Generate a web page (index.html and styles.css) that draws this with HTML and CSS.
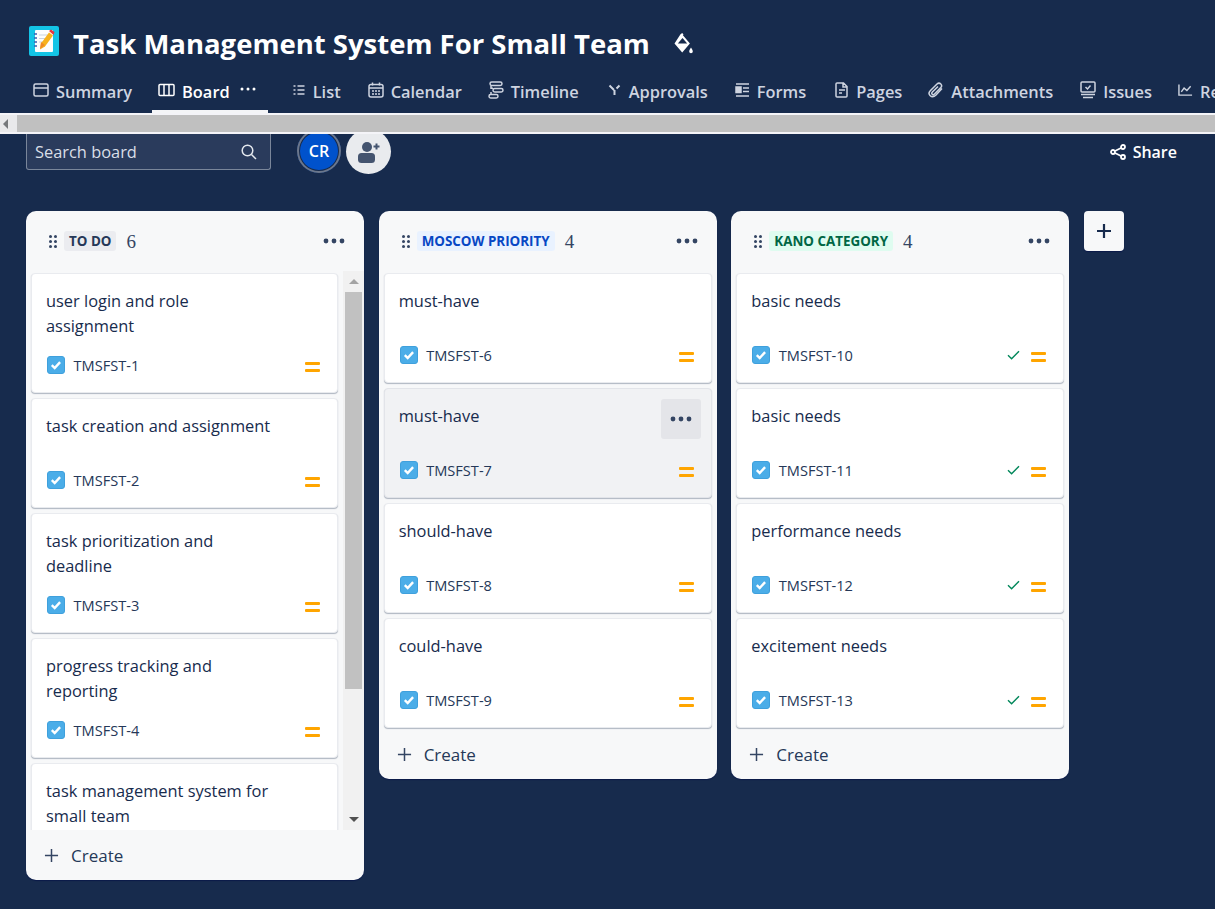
FILE: index.html

```html
<!DOCTYPE html>
<html lang="en">
<head>
  <meta charset="UTF-8" />
  <meta name="viewport" content="width=device-width, initial-scale=1" />
  <title>Task Management System For Small Team</title>
  <link rel="stylesheet" href="styles.css">
</head>
<body>

  <svg class="sprites" aria-hidden="true">
    <symbol id="i-task" viewBox="0 0 18 18">
      <rect x="0.5" y="0.5" width="17" height="17" rx="2.5" fill="#4bade8" stroke="#3fa0dc"/>
      <path d="M4.8 9.2l2.900 2.900 5.400-6" fill="none" stroke="#fff" stroke-width="2.400"/>
    </symbol>
    <symbol id="i-medium" viewBox="0 0 15 10">
      <rect y="0" width="15" height="3" rx="1" fill="#ffa500"/>
      <rect y="7" width="15" height="3" rx="1" fill="#ffa500"/>
    </symbol>
    <symbol id="i-done" viewBox="0 0 13 10">
      <path d="M1 5.200l3.600 3.600L12 1.200" fill="none" stroke="#00875a" stroke-width="1.400"/>
    </symbol>
    <symbol id="i-more" viewBox="0 0 22 6">
      <circle cx="3" cy="3" r="2.400"/><circle cx="11" cy="3" r="2.400"/><circle cx="19" cy="3" r="2.400"/>
    </symbol>
    <symbol id="i-grip" viewBox="0 0 8 13">
      <circle cx="1.500" cy="1.500" r="1.500"/><circle cx="6.500" cy="1.500" r="1.500"/>
      <circle cx="1.500" cy="6.500" r="1.500"/><circle cx="6.500" cy="6.500" r="1.500"/>
      <circle cx="1.500" cy="11.500" r="1.500"/><circle cx="6.500" cy="11.500" r="1.500"/>
    </symbol>
    <symbol id="i-plus" viewBox="0 0 16 16">
      <path d="M8 1v14M1 8h14" fill="none" stroke="currentColor"/>
    </symbol>
  </svg>

  <header class="project">
    <svg class="logo" viewBox="0 0 30 30">
      <rect width="30" height="30" rx="2" fill="#13c4e6"/>
      <rect x="6" y="4" width="18" height="22" rx="1" fill="#fdfdfd"/>
      <path d="M10 9h10M10 12.500h8M10 16h5" stroke="#c9d3de" stroke-width="1.200"/>
      <path d="M5 8h3M5 12h3M5 16h3M5 20h3" stroke="#3d5fb0" stroke-width="1.500"/>
      <path d="M20 6.500l4 3-8 11-5 3 1-6z" fill="#f7b21c"/>
      <path d="M16 19l-4-3-1 7z" fill="#f08a24"/>
      <path d="M20 5l2-1.500 3.500 2.500-1 3z" fill="#e8343f"/>
    </svg>
    <h1 class="project-name">Task Management System For Small Team</h1>
    <svg class="bucket" viewBox="0 0 19 21">
      <path d="M6.500 1.200l1.700-1.200 1.300 1.500-.6.700 7 8.300-7.700 9-7.700-9z" fill="#fff"/>
      <path d="M3.800 10.500L8.500 5l4.700 5.500z" fill="#172b4d"/>
      <path d="M17 14.500c.8 1.500 1.800 2.800 1.800 4a1.800 1.800 0 0 1-3.600 0c0-1.200 1-2.500 1.800-4z" fill="#fff"/>
    </svg>
  </header>

  <nav class="tabs">
    <a class="tab">
      <svg class="tab-icon" viewBox="0 0 16 14"><rect x="1" y="1" width="14" height="12" rx="1.500"/><path d="M1 5h14"/></svg>
      Summary
    </a>
    <a class="tab tab-active">
      <svg class="tab-icon tab-icon-board" viewBox="0 0 17 13"><rect x="1" y="1" width="15" height="11" rx="1"/><path d="M6 1v11M11 1v11"/></svg>
      Board
      <svg class="tab-more" viewBox="0 0 16 4"><circle cx="2" cy="2" r="1.500"/><circle cx="8" cy="2" r="1.500"/><circle cx="14" cy="2" r="1.500"/></svg>
    </a>
    <a class="tab">
      <svg class="tab-icon tab-icon-small" viewBox="0 0 14 12"><path d="M1.500 2h2M1.500 6h2M1.500 10h2M5.500 2h7M5.500 6h7M5.500 10h7"/></svg>
      List
    </a>
    <a class="tab tab-shift-1">
      <svg class="tab-icon" viewBox="0 0 16 16"><rect x="1" y="2.500" width="14" height="12.500" rx="2"/><path d="M4.500 0.500v3M11.500 0.500v3M1 6h14M4 9h2M7 9h2M10 9h2M4 12h2M7 12h2M10 12h2"/></svg>
      Calendar
    </a>
    <a class="tab">
      <svg class="tab-icon tab-icon-tall" viewBox="0 0 16 18"><rect x="2" y="1" width="12" height="3.500" rx="1.700"/><rect x="5" y="7.500" width="10" height="3.500" rx="1.700"/><rect x="1" y="13.500" width="9" height="3.500" rx="1.700"/><path d="M3 4.500v2.800h2M3 11v2.500"/></svg>
      Timeline
    </a>
    <a class="tab tab-shift-3">
      <svg class="tab-icon tab-icon-small tab-icon-bold" viewBox="0 0 14 12"><path d="M1.500 1.500l4.500 4.500M11.500 1.500L8.500 4.500M6.500 6v5"/></svg>
      Approvals
    </a>
    <a class="tab tab-shift-1">
      <svg class="tab-icon tab-icon-mid" viewBox="0 0 15 14"><path d="M1 1h13M1 13h13M8 5h6M8 8.500h6"/><rect x="1" y="4" width="5" height="5.500" fill="currentColor"/></svg>
      Forms
    </a>
    <a class="tab tab-shift-3">
      <svg class="tab-icon tab-icon-small" viewBox="0 0 14 16"><path d="M2 1h6.500L12 4.500V14a1 1 0 0 1-1 1H2a1 1 0 0 1-1-1V2a1 1 0 0 1 1-1zM8 1v4h4M4 8h6M4 11h3"/></svg>
      Pages
    </a>
    <a class="tab">
      <svg class="tab-icon" viewBox="0 0 16 16"><path d="M14 6.500L8 13c-2 2-4.500 2-6 .500s-1-3.500.5-5L9 2c1.300-1.200 2.800-1 3.800 0s1 2.500 0 3.600L6.500 12c-.8.800-1.700.8-2.300.200s-.5-1.500.2-2.200L10 4.500"/></svg>
      Attachments
    </a>
    <a class="tab tab-shift-1">
      <svg class="tab-icon tab-icon-tall" viewBox="0 0 16 18"><rect x="1" y="1" width="14" height="10" rx="1"/><path d="M5.500 6l2 2 3-3.500M1 13.500h14M3 16.500h10"/></svg>
      Issues
    </a>
    <a class="tab">
      <svg class="tab-icon tab-icon-mid" viewBox="0 0 16 13"><path d="M1 0.500V12h14M3.500 8.500l3-4 3 2.500 4-4.500"/></svg>
      Reports
    </a>
  </nav>

  <div class="h-scroll">
    <div class="h-scroll-btn"></div>
    <div class="h-scroll-thumb"></div>
  </div>

  <div class="toolbar">
    <div class="search">
      <span class="search-text">Search board</span>
      <svg class="search-icon" viewBox="0 0 16 16"><circle cx="6.500" cy="6.500" r="5.300"/><path d="M10.500 10.500L15 15"/></svg>
    </div>
    <div class="people">
      <div class="avatar">CR</div>
      <div class="add-person">
        <svg class="add-person-icon" viewBox="0 0 22 22">
          <circle cx="9" cy="6" r="5"/>
          <rect x="0" y="12" width="17" height="10" rx="3.500"/>
          <path d="M15.500 5.500h6M18.500 2.500v6" stroke="#44546f" stroke-width="2"/>
        </svg>
      </div>
    </div>
    <a class="share">
      <svg class="share-icon" viewBox="0 0 16 16"><circle cx="3" cy="8" r="2"/><circle cx="13" cy="3" r="2"/><circle cx="13" cy="13" r="2"/><path d="M5 7l6-3M5 9l6 3"/></svg>
      Share
    </a>
  </div>

  <main class="board">

    <section class="column">
      <div class="column-head">
        <svg class="grip"><use href="#i-grip"/></svg>
        <span class="badge badge-todo">TO DO</span>
        <span class="count">6</span>
        <svg class="more"><use href="#i-more"/></svg>
      </div>
      <div class="column-body">
        <div class="cards cards-scroll">
          <article class="card">
            <p class="card-title narrow">user login and role assignment</p>
            <div class="card-meta">
              <svg class="task-icon"><use href="#i-task"/></svg>
              <span class="card-id">TMSFST-1</span>
              <svg class="priority"><use href="#i-medium"/></svg>
            </div>
          </article>
          <article class="card">
            <p class="card-title">task creation and assignment</p>
            <div class="card-meta">
              <svg class="task-icon"><use href="#i-task"/></svg>
              <span class="card-id">TMSFST-2</span>
              <svg class="priority"><use href="#i-medium"/></svg>
            </div>
          </article>
          <article class="card">
            <p class="card-title narrow">task prioritization and deadline</p>
            <div class="card-meta">
              <svg class="task-icon"><use href="#i-task"/></svg>
              <span class="card-id">TMSFST-3</span>
              <svg class="priority"><use href="#i-medium"/></svg>
            </div>
          </article>
          <article class="card">
            <p class="card-title narrow">progress tracking and reporting</p>
            <div class="card-meta">
              <svg class="task-icon"><use href="#i-task"/></svg>
              <span class="card-id">TMSFST-4</span>
              <svg class="priority"><use href="#i-medium"/></svg>
            </div>
          </article>
          <article class="card">
            <p class="card-title narrow">task management system for small team</p>
          </article>
        </div>
        <div class="v-scroll">
          <div class="v-scroll-btn"><span class="arrow-up"></span></div>
          <div class="v-scroll-thumb"></div>
          <div class="v-scroll-rest"></div>
          <div class="v-scroll-btn"><span class="arrow-down"></span></div>
        </div>
      </div>
      <div class="create">
        <svg class="create-icon"><use href="#i-plus"/></svg>
        Create
      </div>
    </section>

    <section class="column">
      <div class="column-head">
        <svg class="grip"><use href="#i-grip"/></svg>
        <span class="badge badge-moscow">MOSCOW PRIORITY</span>
        <span class="count">4</span>
        <svg class="more"><use href="#i-more"/></svg>
      </div>
      <div class="cards">
        <article class="card">
          <p class="card-title">must-have</p>
          <div class="card-meta">
            <svg class="task-icon"><use href="#i-task"/></svg>
            <span class="card-id">TMSFST-6</span>
            <svg class="priority"><use href="#i-medium"/></svg>
          </div>
        </article>
        <article class="card card-hover">
          <p class="card-title">must-have</p>
          <div class="card-action"><svg class="more"><use href="#i-more"/></svg></div>
          <div class="card-meta">
            <svg class="task-icon"><use href="#i-task"/></svg>
            <span class="card-id">TMSFST-7</span>
            <svg class="priority"><use href="#i-medium"/></svg>
          </div>
        </article>
        <article class="card">
          <p class="card-title">should-have</p>
          <div class="card-meta">
            <svg class="task-icon"><use href="#i-task"/></svg>
            <span class="card-id">TMSFST-8</span>
            <svg class="priority"><use href="#i-medium"/></svg>
          </div>
        </article>
        <article class="card">
          <p class="card-title">could-have</p>
          <div class="card-meta">
            <svg class="task-icon"><use href="#i-task"/></svg>
            <span class="card-id">TMSFST-9</span>
            <svg class="priority"><use href="#i-medium"/></svg>
          </div>
        </article>
      </div>
      <div class="create">
        <svg class="create-icon"><use href="#i-plus"/></svg>
        Create
      </div>
    </section>

    <section class="column">
      <div class="column-head">
        <svg class="grip"><use href="#i-grip"/></svg>
        <span class="badge badge-kano">KANO CATEGORY</span>
        <span class="count">4</span>
        <svg class="more"><use href="#i-more"/></svg>
      </div>
      <div class="cards">
        <article class="card">
          <p class="card-title">basic needs</p>
          <div class="card-meta">
            <svg class="task-icon"><use href="#i-task"/></svg>
            <span class="card-id">TMSFST-10</span>
            <svg class="done"><use href="#i-done"/></svg>
            <svg class="priority"><use href="#i-medium"/></svg>
          </div>
        </article>
        <article class="card">
          <p class="card-title">basic needs</p>
          <div class="card-meta">
            <svg class="task-icon"><use href="#i-task"/></svg>
            <span class="card-id">TMSFST-11</span>
            <svg class="done"><use href="#i-done"/></svg>
            <svg class="priority"><use href="#i-medium"/></svg>
          </div>
        </article>
        <article class="card">
          <p class="card-title">performance needs</p>
          <div class="card-meta">
            <svg class="task-icon"><use href="#i-task"/></svg>
            <span class="card-id">TMSFST-12</span>
            <svg class="done"><use href="#i-done"/></svg>
            <svg class="priority"><use href="#i-medium"/></svg>
          </div>
        </article>
        <article class="card">
          <p class="card-title">excitement needs</p>
          <div class="card-meta">
            <svg class="task-icon"><use href="#i-task"/></svg>
            <span class="card-id">TMSFST-13</span>
            <svg class="done"><use href="#i-done"/></svg>
            <svg class="priority"><use href="#i-medium"/></svg>
          </div>
        </article>
      </div>
      <div class="create">
        <svg class="create-icon"><use href="#i-plus"/></svg>
        Create
      </div>
    </section>

    <button class="add-column"><svg class="add-column-icon"><use href="#i-plus"/></svg></button>

  </main>

</body>
</html>
```

FILE: styles.css

```css
html, body {
  margin: 0;
  height: 909px;
  overflow: hidden;
}
body {
  background: #172b4d;
  font-family: "Open Sans", "Noto Sans", sans-serif;
  color: #172b4d;
}
.sprites {
  display: none;
}

/* project title */
.project {
  display: flex;
  align-items: flex-start;
  height: 80px;
  padding: 0 0 0 29px;
  box-sizing: border-box;
}
.logo {
  width: 30px;
  height: 30px;
  margin: 26px 14px 0 0;
}
.project-name {
  margin: 25px 0 0;
  font-size: 27.5px;
  font-weight: 700;
  line-height: 38px;
  color: #fff;
  white-space: nowrap;
}
.bucket {
  width: 19px;
  height: 21px;
  margin: 33px 0 0 24px;
}

/* tabs */
.tabs {
  display: flex;
  gap: 26px;
  height: 33px;
  padding-left: 33px;
  overflow: hidden;
  white-space: nowrap;
}
.tab {
  position: relative;
  display: flex;
  align-items: flex-start;
  gap: 7px;
  font-size: 16.4px;
  font-weight: 600;
  line-height: 24px;
  color: #ced4e0;
}
.tab-shift-1 {
  margin-left: 1px;
}
.tab-shift-3 {
  margin-left: 3px;
}
.tab-icon {
  width: 16px;
  height: 16px;
  margin-top: 2px;
  fill: none;
  stroke: currentColor;
  stroke-width: 1.5;
}
.tab-icon-board {
  width: 17px;
}
.tab-icon-small {
  width: 14px;
}
.tab-icon-mid {
  width: 15px;
}
.tab-icon-tall {
  height: 18px;
  margin-top: 1px;
}
.tab-icon-bold {
  stroke-width: 2;
}
.tab-active {
  color: #fff;
  margin-right: 10px;
}
.tab-active::after {
  content: "";
  position: absolute;
  left: -6px;
  right: -12px;
  bottom: 0;
  height: 3px;
  background: #f4f5f7;
}
.tab-more {
  width: 16px;
  height: 4px;
  margin: 7px 0 0 3px;
  fill: #fff;
}

/* horizontal scrollbar of the page */
.h-scroll {
  position: relative;
  z-index: 2;
  display: flex;
  height: 21px;
  box-sizing: border-box;
  border-top: 2px solid #f4f4f8;
  border-bottom: 2px solid #f4f4f8;
  background: #c0c0c0;
}
.h-scroll-btn {
  position: relative;
  width: 17px;
  background: #e9e9eb;
}
.h-scroll-btn::before {
  content: "";
  position: absolute;
  left: 3px;
  top: 4px;
  border-style: solid;
  border-width: 5px 5px 5px 0;
  border-color: transparent #77797c transparent transparent;
}
.h-scroll-thumb {
  flex: 1;
}

/* toolbar */
.toolbar {
  display: flex;
  align-items: flex-start;
  height: 37px;
  padding: 0 38px 0 26px;
}
.search {
  display: flex;
  align-items: center;
  justify-content: space-between;
  width: 245px;
  height: 36px;
  box-sizing: border-box;
  padding: 0 13px 0 8px;
  background: #2a3b5c;
  border: 1px solid #7a869a;
  border-top: none;
  border-radius: 0 0 3px 3px;
}
.search-text {
  font-size: 16.4px;
  color: #d9dee7;
}
.search-icon {
  width: 16px;
  height: 16px;
  fill: none;
  stroke: #e4e8ee;
  stroke-width: 1.500;
}
.people {
  display: flex;
  gap: 5px;
  margin: -5px 0 0 26px;
}
.avatar {
  display: flex;
  align-items: center;
  justify-content: center;
  width: 44px;
  height: 44px;
  box-sizing: border-box;
  border-radius: 50%;
  background: #0052cc;
  box-shadow: inset 0 0 0 2px #6b778c, inset 0 0 0 3px #172b4d;
  color: #fff;
  font-size: 16px;
  font-weight: 600;
}
.add-person {
  display: flex;
  align-items: center;
  justify-content: center;
  width: 45px;
  height: 45px;
  border-radius: 50%;
  background: #e9ebee;
}
.add-person-icon {
  width: 22px;
  height: 22px;
  fill: #44546f;
}
.share {
  display: flex;
  align-items: center;
  gap: 7px;
  height: 36px;
  margin-left: auto;
  font-size: 16px;
  font-weight: 600;
  color: #fff;
}
.share-icon {
  width: 16px;
  height: 16px;
  fill: none;
  stroke: #fff;
  stroke-width: 1.800;
}

/* board */
.board {
  display: flex;
  align-items: flex-start;
  gap: 14.67px;
  margin-top: 40px;
  padding-left: 26px;
}
.column {
  display: flex;
  flex-direction: column;
  width: 338px;
  background: #f7f8f9;
  border-radius: 10px;
  box-shadow: 0 1px 1px #0a1a4a;
  overflow: hidden;
}
.column-head {
  display: flex;
  align-items: center;
  height: 60px;
  padding: 0 19px 0 23px;
}
.grip {
  width: 8px;
  height: 13px;
  margin-right: 7px;
  fill: #344563;
}
.badge {
  height: 20px;
  padding: 0 5px;
  border-radius: 3px;
  font-size: 13.4px;
  font-weight: 700;
  line-height: 20px;
}
.badge-todo {
  background: #ebecf0;
  color: #253858;
}
.badge-moscow {
  background: #e9f2ff;
  color: #0747c4;
}
.badge-kano {
  background: #dffcf0;
  color: #006644;
}
.count {
  margin: 2px 0 0 10px;
  font-family: "Liberation Serif", serif;
  font-size: 19px;
  color: #344563;
}
.more {
  width: 22px;
  height: 6px;
  fill: #344563;
}
.column-head .more {
  margin-left: auto;
}
.column-body {
  display: flex;
  height: 559px;
}
.cards {
  display: flex;
  flex-direction: column;
  gap: 5px;
  padding: 2px 5px 1px;
}
.cards-scroll {
  flex: 1;
  padding-right: 5px;
  overflow: hidden;
}
.card {
  position: relative;
  flex: none;
  box-sizing: border-box;
  padding: 14px 17px 16px 14px;
  background: #fff;
  border: 1px solid #e9ebef;
  border-radius: 4px;
  box-shadow: 0 1px 1px rgba(9, 30, 66, 0.3);
}
.card-title {
  min-height: 40px;
  margin: 0 0 16px;
  font-size: 16.4px;
  line-height: 25px;
  color: #172b4d;
}
.narrow {
  max-width: 228px;
}
.card-meta {
  display: flex;
  align-items: center;
  height: 22px;
}
.task-icon {
  width: 18px;
  height: 18px;
  margin: 0 8.5px 0 1px;
}
.card-id {
  font-size: 14.6px;
  color: #253858;
}
.priority {
  width: 15px;
  height: 10px;
  margin: 4px 0 0 auto;
}
.done {
  width: 13px;
  height: 10px;
  margin-left: auto;
}
.done + .priority {
  margin-left: 11px;
}
.card-hover {
  background: #f1f2f4;
  border-color: #e2e4e9;
}
.card-action {
  position: absolute;
  top: 10px;
  right: 10px;
  display: flex;
  align-items: center;
  justify-content: center;
  width: 40px;
  height: 40px;
  border-radius: 3px;
  background: #e4e5e9;
}

/* scrollbar of the first column */
.v-scroll {
  display: flex;
  flex-direction: column;
  width: 21px;
  background: #f1f1f1;
}
.v-scroll-btn {
  display: flex;
  align-items: center;
  justify-content: center;
  height: 21px;
}
.arrow-up {
  border-style: solid;
  border-width: 0 5px 5px;
  border-color: transparent transparent #a3a3a3;
}
.arrow-down {
  border-style: solid;
  border-width: 5px 5px 0;
  border-color: #505050 transparent transparent;
}
.v-scroll-thumb {
  height: 397px;
  margin: 0 2px;
  background: #c1c1c1;
}
.v-scroll-rest {
  flex: 1;
}
.create {
  display: flex;
  align-items: center;
  gap: 12px;
  height: 50px;
  padding: 0 0 0 18px;
  box-sizing: border-box;
  font-size: 17px;
  font-weight: 500;
  color: #253858;
}
.create-icon {
  width: 15px;
  height: 15px;
  color: #344563;
  stroke-width: 1.6;
}
.add-column {
  display: flex;
  align-items: center;
  justify-content: center;
  width: 40px;
  height: 40px;
  padding: 0;
  background: #f7f8f9;
  border: none;
  border-radius: 4px;
  box-shadow: 0 1px 1px #0a1a4a;
}
.add-column-icon {
  width: 16px;
  height: 16px;
  color: #172b4d;
  stroke-width: 2.2;
}
```
